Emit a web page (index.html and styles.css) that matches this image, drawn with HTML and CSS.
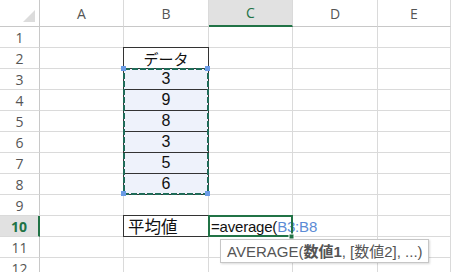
FILE: index.html
```html
<!DOCTYPE html>
<html lang="ja">
<head>
  <meta charset="UTF-8" />
  <title>平均値</title>
  <link rel="stylesheet" href="styles.css">
</head>
<body>
  <div class="sheet">
    <div class="grid">
      <div class="corner"><span class="tri"></span></div>
      <div class="colhead">A</div>
      <div class="colhead">B</div>
      <div class="colhead active">C</div>
      <div class="colhead">D</div>
      <div class="colhead">E</div>

      <div class="rowhead">1</div><div class="cell"></div><div class="cell"></div><div class="cell"></div><div class="cell"></div><div class="cell"></div>
      <div class="rowhead">2</div><div class="cell"></div><div class="cell boxed ja">データ</div><div class="cell"></div><div class="cell"></div><div class="cell"></div>
      <div class="rowhead">3</div><div class="cell"></div><div class="cell boxed num">3</div><div class="cell"></div><div class="cell"></div><div class="cell"></div>
      <div class="rowhead">4</div><div class="cell"></div><div class="cell boxed num">9</div><div class="cell"></div><div class="cell"></div><div class="cell"></div>
      <div class="rowhead">5</div><div class="cell"></div><div class="cell boxed num">8</div><div class="cell"></div><div class="cell"></div><div class="cell"></div>
      <div class="rowhead">6</div><div class="cell"></div><div class="cell boxed num">3</div><div class="cell"></div><div class="cell"></div><div class="cell"></div>
      <div class="rowhead">7</div><div class="cell"></div><div class="cell boxed num">5</div><div class="cell"></div><div class="cell"></div><div class="cell"></div>
      <div class="rowhead">8</div><div class="cell"></div><div class="cell boxed num">6</div><div class="cell"></div><div class="cell"></div><div class="cell"></div>
      <div class="rowhead">9</div><div class="cell"></div><div class="cell"></div><div class="cell"></div><div class="cell"></div><div class="cell"></div>
      <div class="rowhead active">10</div><div class="cell"></div><div class="cell boxed ja left">平均値</div><div class="cell formula">=average(<span class="ref">B3:B8</span></div><div class="cell"></div><div class="cell"></div>
      <div class="rowhead">11</div><div class="cell"></div><div class="cell"></div><div class="cell"></div><div class="cell"></div><div class="cell"></div>
      <div class="rowhead">12</div><div class="cell"></div><div class="cell"></div><div class="cell"></div><div class="cell"></div><div class="cell"></div>
    </div>

    <svg class="marks" width="451" height="272" viewBox="0 0 451 272">
      <rect x="124" y="69" width="84" height="125" fill="none" stroke="#1f6b58" stroke-width="2" stroke-dasharray="6 2"/>
      <rect x="121" y="66" width="5" height="5" fill="#6b9be6"/>
      <rect x="205" y="66" width="5" height="5" fill="#6b9be6"/>
      <rect x="121" y="191" width="5" height="5" fill="#6b9be6"/>
      <rect x="205" y="191" width="5" height="5" fill="#6b9be6"/>
      <rect x="209" y="216" width="83" height="20" fill="none" stroke="#217346" stroke-width="2"/>
      <rect x="289" y="234" width="5" height="5" fill="#217346" stroke="#fff" stroke-width="1"/>
    </svg>

    <div class="tip">AVERAGE(<b>数値1</b>, [数値2], ...)</div>
  </div>
</body>
</html>
```

FILE: styles.css
```css
body {
  margin: 0;
  background: #fff;
  overflow: hidden;
  font-family: "Liberation Sans", "Noto Sans CJK JP", sans-serif;
}
.sheet {
  position: relative;
  width: 451px;
  height: 272px;
  overflow: hidden;
}
.grid {
  display: grid;
  grid-template-columns: 40px 84px 85px 84px 85px 1fr;
  grid-template-rows: 27px repeat(12, 21px);
}
.grid > div {
  box-sizing: border-box;
  border-right: 1px solid #dadada;
  border-bottom: 1px solid #dadada;
}
.corner {
  display: flex;
  align-items: flex-end;
  justify-content: flex-end;
  padding: 0 4px 4px 0;
  border-color: #c8c8c8 !important;
}
.tri {
  width: 0;
  height: 0;
  border-left: 12px solid transparent;
  border-bottom: 12px solid #dcdcdc;
}
.colhead {
  display: flex;
  align-items: center;
  justify-content: center;
  font-family: "Open Sans", "Liberation Sans", sans-serif;
  font-size: 14px;
  color: #555;
  border-bottom-color: #c8c8c8 !important;
}
.colhead.active {
  background: #e1e1e1;
  color: #217346;
  border-bottom: 2px solid #217346 !important;
}
.rowhead {
  display: flex;
  align-items: center;
  justify-content: center;
  font-family: "Open Sans", "Liberation Sans", sans-serif;
  font-size: 14px;
  color: #555;
  border-right-color: #c8c8c8 !important;
}
.rowhead.active {
  background: #e1e1e1;
  color: #217346;
  font-weight: bold;
  border-right: 2px solid #217346 !important;
}
.cell {
  display: flex;
  align-items: center;
  justify-content: center;
  font-size: 16px;
  color: #111;
  white-space: nowrap;
}
.boxed {
  position: relative;
}
.boxed::after {
  content: "";
  position: absolute;
  top: -1px;
  left: -1px;
  right: -1px;
  bottom: -1px;
  border: 1px solid #333;
}
.num {
  background: #eef2fb;
}
.ja {
  font-size: 15px;
}
.left {
  justify-content: flex-start;
  padding-left: 4px;
  font-size: 16.5px;
}
.formula {
  justify-content: flex-start;
  padding-left: 2px;
  font-size: 15px;
  letter-spacing: -0.2px;
  overflow: visible;
}
.ref {
  color: #5b8bd5;
}
.marks {
  position: absolute;
  top: 0;
  left: 0;
  pointer-events: none;
}
.tip {
  position: absolute;
  left: 220px;
  top: 239px;
  padding: 0 5px 1px 6px;
  background: #fff;
  border: 1px solid #c6c6c6;
  box-shadow: 1px 1px 2px rgba(0,0,0,0.15);
  font-size: 15px;
  color: #555;
  white-space: nowrap;
}
```
